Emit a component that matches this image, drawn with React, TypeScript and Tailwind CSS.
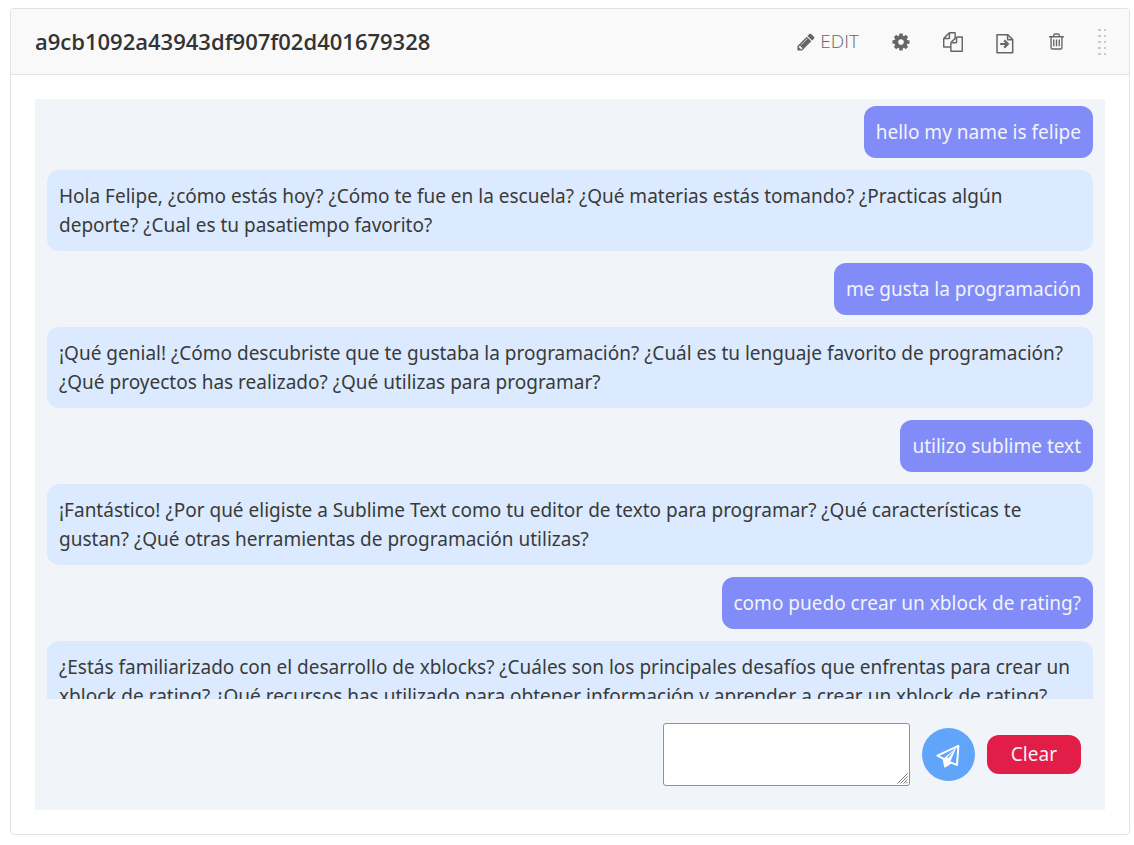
import type { ReactNode } from "react";

type Message = { from: "user" | "bot"; text: string };

const messages: Message[] = [
  { from: "user", text: "hello my name is felipe" },
  {
    from: "bot",
    text: "Hola Felipe, ¿cómo estás hoy? ¿Cómo te fue en la escuela? ¿Qué materias estás tomando? ¿Practicas algún deporte? ¿Cual es tu pasatiempo favorito?",
  },
  { from: "user", text: "me gusta la programación" },
  {
    from: "bot",
    text: "¡Qué genial! ¿Cómo descubriste que te gustaba la programación? ¿Cuál es tu lenguaje favorito de programación? ¿Qué proyectos has realizado? ¿Qué utilizas para programar?",
  },
  { from: "user", text: "utilizo sublime text" },
  {
    from: "bot",
    text: "¡Fantástico! ¿Por qué eligiste a Sublime Text como tu editor de texto para programar? ¿Qué características te gustan? ¿Qué otras herramientas de programación utilizas?",
  },
  { from: "user", text: "como puedo crear un xblock de rating?" },
  {
    from: "bot",
    text: "¿Estás familiarizado con el desarrollo de xblocks? ¿Cuáles son los principales desafíos que enfrentas para crear un xblock de rating? ¿Qué recursos has utilizado para obtener información y aprender a crear un xblock de rating?",
  },
];

const icons = {
  pencil:
    "M491 1536l91-91-235-235-91 91v107h128v128h107zm523-928q0-22-22-22-10 0-17 7l-542 542q-7 7-7 17 0 22 22 22 10 0 17-7l542-542q7-7 7-17zm-54-192l416 416-832 832h-416v-416zm683 96q0 53-37 90l-166 166-416-416 166-165q36-38 90-38 53 0 91 38l235 234q37 39 37 91z",
  cog: "M1152 896q0-106-75-181t-181-75-181 75-75 181 75 181 181 75 181-75 75-181zm512-109v222q0 12-8 23t-20 13l-185 28q-19 54-39 91 35 50 107 138 10 12 10 25t-9 23q-27 37-99 108t-94 71q-12 0-26-9l-138-108q-44 23-91 38-16 136-29 186-7 28-36 28h-222q-14 0-24.5-8.5t-11.5-21.5l-28-184q-49-16-90-37l-141 107q-10 9-25 9-14 0-25-11-126-114-165-168-7-10-7-23 0-12 8-23 15-21 51-66.5t54-70.5q-27-50-41-99l-183-27q-13-2-21-12.5t-8-23.5v-222q0-12 8-23t19-13l186-28q14-46 39-92-40-57-107-138-10-12-10-24 0-10 9-23 26-36 98.5-107.5t94.5-71.5q13 0 26 10l138 107q44-23 91-38 16-136 29-186 7-28 36-28h222q14 0 24.5 8.5t11.5 21.5l28 184q49 16 90 37l142-107q9-9 24-9 13 0 25 10 129 119 165 170 7 8 7 22 0 12-8 23-15 21-51 66.5t-54 70.5q26 50 41 98l183 28q13 2 21 12.5t8 23.5z",
  copy: "M1696 384q40 0 68 28t28 68v1216q0 40-28 68t-68 28h-960q-40 0-68-28t-28-68v-288h-544q-40 0-68-28t-28-68v-672q0-40 20-88t48-76l408-408q28-28 76-48t88-20h416q40 0 68 28t28 68v328q68-40 128-40h416zm-544 213l-299 299h299v-299zm-640-384l-299 299h299v-299zm196 647l316-316v-416h-384v416q0 40-28 68t-68 28h-416v640h512v-256q0-40 20-88t48-76zm956 804v-1152h-384v416q0 40-28 68t-68 28h-416v640h896z",
  trash:
    "M704 736v576q0 14-9 23t-23 9h-64q-14 0-23-9t-9-23v-576q0-14 9-23t23-9h64q14 0 23 9t9 23zm256 0v576q0 14-9 23t-23 9h-64q-14 0-23-9t-9-23v-576q0-14 9-23t23-9h64q14 0 23 9t9 23zm256 0v576q0 14-9 23t-23 9h-64q-14 0-23-9t-9-23v-576q0-14 9-23t23-9h64q14 0 23 9t9 23zm128 724v-948h-896v948q0 22 7 40.5t14.5 27 10.5 8.5h832q3 0 10.5-8.5t14.5-27 7-40.5zm-672-1076h448l-48-117q-7-9-17-11h-317q-10 2-17 11zm928 32v64q0 14-9 23t-23 9h-96v948q0 83-47 143.5t-113 60.5h-832q-66 0-113-58.5t-47-141.5v-952h-96q-14 0-23-9t-9-23v-64q0-14 9-23t23-9h309l70-167q15-37 54-63t79-26h320q40 0 79 26t54 63l70 167h309q14 0 23 9t9 23z",
};

function Icon({ path, className = "size-5" }: { path: string; className?: string }) {
  return (
    <svg viewBox="0 0 1792 1792" fill="currentColor" aria-hidden="true" className={className}>
      <path d={path} />
    </svg>
  );
}

function MoveIcon() {
  return (
    <svg
      viewBox="0 0 20 24"
      fill="none"
      stroke="currentColor"
      strokeWidth="1.5"
      strokeLinejoin="round"
      aria-hidden="true"
      className="h-6 w-5"
    >
      <path d="M2 4.7h10.8l4.9 4.9v13.1H2z" />
      <path d="M12.6 4.7v5.1h5.1" />
      <path d="M5.2 14h7.4M9.2 10.4l3.6 3.6-3.6 3.6" strokeWidth="2.2" strokeLinejoin="miter" />
    </svg>
  );
}

function SendIcon() {
  return (
    <svg viewBox="0 0 26 26" fill="none" stroke="currentColor" aria-hidden="true" className="size-[26px]">
      <path
        d="M2.4 13.6L23.4 3.9 22 22.9l-6-2.3-6 3.8-1.3-7.6z"
        strokeWidth="2"
        strokeLinejoin="round"
      />
      <path d="M8.6 16.6L21.4 5.6l-6.4 14.6-5 4z" fill="currentColor" stroke="none" />
      <path d="M12 15.6L19.4 7.4 13.6 16z" fill="#60a5fa" stroke="none" />
    </svg>
  );
}

function ResizeGrip() {
  return (
    <svg
      viewBox="0 0 11 11"
      stroke="#777"
      aria-hidden="true"
      className="pointer-events-none absolute right-0.5 bottom-0.5 size-[11px]"
    >
      <path d="M0.5 10.5l10-10M3.5 10.5l7-7M6.5 10.5l4-4M9 10.5l1.5-1.5" />
    </svg>
  );
}

function IconButton({ label, children }: { label: string; children: ReactNode }) {
  return (
    <button type="button" aria-label={label} className="flex items-center">
      {children}
    </button>
  );
}

function DragHandle() {
  return (
    <svg viewBox="0 0 9 26" fill="#c4c8d4" aria-hidden="true" className="h-[26px] w-[9px]">
      {[0, 6, 12, 18, 24].map((y) => (
        <g key={y}>
          <rect x="0" y={y} width="3" height="2" />
          <rect x="6" y={y} width="2" height="2" />
        </g>
      ))}
    </svg>
  );
}

function Bubble({ message }: { message: Message }) {
  if (message.from === "user") {
    return (
      <li className="self-end rounded-xl bg-[#818cf8] p-3 leading-7 text-[#f3f4f6]">{message.text}</li>
    );
  }
  return (
    <li className="rounded-xl bg-[#dbeafe] px-3 pt-3 pb-[11px] leading-[29px]">{message.text}</li>
  );
}

export default function App() {
  return (
    <main className="bg-white pt-2 pr-1 pb-2.5 pl-2.5 font-['Noto_Sans','Open_Sans',sans-serif] text-[19px] text-[#3a3a3a]">
      <section className="rounded-[4px] border border-[#e2e2e4] bg-white">
        <header className="flex h-[66px] items-center justify-between rounded-t-[3px] border-b border-[#e2e2e4] bg-[#f9f9f9] pr-[22px] pl-6 font-['Open_Sans',sans-serif]">
          <h1 className="text-[22px] font-semibold text-[#333]">a9cb1092a43943df907f02d401679328</h1>
          <div className="flex items-center text-[#666]">
            <button type="button" className="flex items-center gap-1 font-light">
              <Icon path={icons.pencil} />
              EDIT
            </button>
            <div className="ml-8 flex items-center gap-8">
              <IconButton label="Settings">
                <Icon path={icons.cog} />
              </IconButton>
              <IconButton label="Duplicate">
                <Icon path={icons.copy} />
              </IconButton>
              <IconButton label="Move">
                <MoveIcon />
              </IconButton>
              <IconButton label="Delete">
                <Icon path={icons.trash} className="size-[19px]" />
              </IconButton>
              <IconButton label="Drag to reorder">
                <DragHandle />
              </IconButton>
            </div>
          </div>
        </header>

        <div className="p-6">
          <div className="bg-[#f1f5f9]">
            <ul className="flex h-[600px] flex-col gap-3 overflow-x-hidden overflow-y-auto px-3 pt-[7px] [scrollbar-width:none] *:shrink-0">
              {messages.map((message) => (
                <Bubble key={message.text} message={message} />
              ))}
            </ul>
            <form className="flex items-center justify-end gap-3 p-6" onSubmit={(e) => e.preventDefault()}>
              <div className="relative">
                <textarea
                  aria-label="Message"
                  className="block h-[63px] w-[247px] resize rounded-[3px] border border-[#8f8f9d] bg-white px-1 [&::-webkit-resizer]:hidden"
                />
                <ResizeGrip />
              </div>
              <button
                type="submit"
                aria-label="Send"
                className="flex size-[53px] items-center justify-center rounded-full bg-[#60a5fa] text-white"
              >
                <SendIcon />
              </button>
              <button type="button" className="h-[39px] rounded-xl bg-[#e11d48] px-6 text-[#f3f4f6]">
                Clear
              </button>
            </form>
          </div>
        </div>
      </section>
    </main>
  );
}
